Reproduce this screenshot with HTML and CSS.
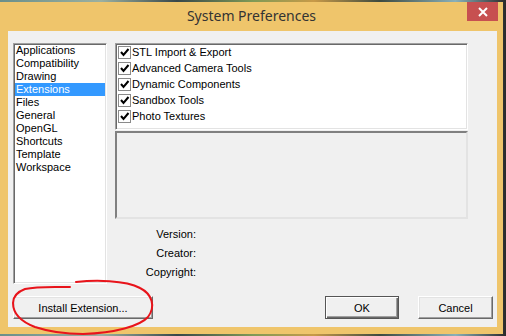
FILE: index.html
```html
<!DOCTYPE html>
<html>
<head>
    <meta charset="utf-8">
    <meta name="viewport" content="width=device-width, initial-scale=1">
    <title>System Preferences</title>
    <link rel="stylesheet" href="styles.css">
</head>
<body>
    <div class="window">
        <div class="titlebar">
            <span></span>
            <span class="title">System Preferences</span>
            <span class="close">
                <svg width="10" height="10" viewBox="0 0 10 10"><path d="M1 1 L9 9 M9 1 L1 9" stroke="#fff" stroke-width="2"/></svg>
            </span>
        </div>
        <div class="client">
            <div class="main">
                <ul class="pages">
                    <li>Applications</li>
                    <li>Compatibility</li>
                    <li>Drawing</li>
                    <li class="selected">Extensions</li>
                    <li>Files</li>
                    <li>General</li>
                    <li>OpenGL</li>
                    <li>Shortcuts</li>
                    <li>Template</li>
                    <li>Workspace</li>
                </ul>
                <div class="panel">
                    <div class="checklist">
                        <div class="check_row"><span class="chk"><svg width="13" height="13" viewBox="0 0 13 13"><path d="M3 6 L5.5 9 L10.5 3" fill="none" stroke="#000" stroke-width="2"/></svg></span>STL Import &amp; Export</div>
                        <div class="check_row"><span class="chk"><svg width="13" height="13" viewBox="0 0 13 13"><path d="M3 6 L5.5 9 L10.5 3" fill="none" stroke="#000" stroke-width="2"/></svg></span>Advanced Camera Tools</div>
                        <div class="check_row"><span class="chk"><svg width="13" height="13" viewBox="0 0 13 13"><path d="M3 6 L5.5 9 L10.5 3" fill="none" stroke="#000" stroke-width="2"/></svg></span>Dynamic Components</div>
                        <div class="check_row"><span class="chk"><svg width="13" height="13" viewBox="0 0 13 13"><path d="M3 6 L5.5 9 L10.5 3" fill="none" stroke="#000" stroke-width="2"/></svg></span>Sandbox Tools</div>
                        <div class="check_row"><span class="chk"><svg width="13" height="13" viewBox="0 0 13 13"><path d="M3 6 L5.5 9 L10.5 3" fill="none" stroke="#000" stroke-width="2"/></svg></span>Photo Textures</div>
                    </div>
                    <div class="desc"></div>
                    <div class="info">
                        <span class="label">Version:</span><span></span>
                        <span class="label">Creator:</span><span></span>
                        <span class="label">Copyright:</span><span></span>
                    </div>
                </div>
            </div>
            <div class="buttons">
                <button class="btn install">Install Extension...</button>
                <span class="spacer"></span>
                <button class="btn ok">OK</button>
                <button class="btn cancel">Cancel</button>
            </div>
        </div>
    </div>

    <!-- red marker loop round the install button -->
    <svg class="scribble" width="506" height="336" viewBox="0 0 506 336">
        <path d="M76 282 C95 280 125 280 140 288 C152 294 156 306 148 317 C140 326 115 333 83 334 C65 334 50 332 35 327 C22 322 13 314 13 303 C13 296 17 292 25 289 C38 286 55 287 70 287" fill="none" stroke="#e8141b" stroke-width="2" stroke-linecap="round"/>
    </svg>
</body>
</html>
```

FILE: styles.css
```css
html, body {
    margin: 0;
    padding: 0;
}
body {
    width: 506px;
    height: 336px;
    overflow: hidden;
    position: relative;
    background: linear-gradient(90deg, #6a8f8a, #9bb0a0 20%, #37474a 35%, #7f9a56 50%, #c89a48 62%, #3d4a40 75%, #8ab0b8 90%, #2b2b2b);
    font-family: "Liberation Sans", Arial, sans-serif;
    font-size: 11px;
    color: #000;
}
.window {
    margin-top: 2px;
    width: 503px;
    height: 332px;
    background: #efc56b;
}
.titlebar {
    display: grid;
    grid-template-columns: 36px 1fr 36px;
    height: 29px;
}
.title {
    font-family: "Noto Sans", "Open Sans", sans-serif;
    font-size: 14px;
    color: #333;
    text-align: center;
    line-height: 27px;
}
.close {
    width: 31px;
    height: 19px;
    background: #c75050;
    display: flex;
    align-items: center;
    justify-content: center;
}
.client {
    margin-left: 8px;
    width: 489px;
    height: 296px;
    background: #f0f0f0;
    display: flex;
    flex-direction: column;
}
.main {
    display: flex;
    gap: 8px;
    padding: 12px 0 0 5px;
}
.pages {
    list-style: none;
    margin: 0;
    padding: 0 1px;
    width: 94px;
    height: 241px;
    box-sizing: border-box;
    background: #fff;
    border: 1px solid;
    border-color: #a0a0a0 #fff #fff #a0a0a0;
    box-shadow: inset 1px 1px #696969, inset -1px -1px #e3e3e3;
}
.pages li {
    height: 13px;
    line-height: 13px;
    padding-left: 1px;
}
.pages .selected {
    background: #3399ff;
    color: #fff;
}
.panel {
    width: 353px;
}
.checklist {
    height: 87px;
    box-sizing: border-box;
    background: #fff;
    border: 1px solid;
    border-color: #a0a0a0 #fff #fff #a0a0a0;
    box-shadow: inset 1px 1px #696969, inset -1px -1px #e3e3e3;
    padding-left: 2px;
}
.check_row {
    display: flex;
    align-items: center;
    height: 16px;
}
.chk {
    width: 13px;
    height: 13px;
    box-sizing: border-box;
    border: 1px solid #8a8a8a;
    background: #fff;
    margin-right: 1px;
    display: flex;
}
.chk svg {
    margin: -1px;
}
.desc {
    margin-top: 1px;
    height: 88px;
    box-sizing: border-box;
    border: 2px solid;
    border-color: #808080 #e3e3e3 #e3e3e3 #808080;
}
.info {
    display: grid;
    grid-template-columns: 81px 1fr;
    grid-auto-rows: 19px;
    margin-top: 6px;
    line-height: 19px;
}
.label {
    text-align: right;
}
.buttons {
    display: flex;
    gap: 19px;
    margin-top: 12px;
    padding: 0 4px 0 5px;
    height: 23px;
}
.spacer {
    flex: 1;
}
.btn {
    font-family: "Liberation Sans", Arial, sans-serif;
    font-size: 11px;
    color: #000;
    background: #f0f0f0;
    height: 23px;
    padding: 0;
    border: 1px solid;
    border-color: #fff #696969 #696969 #fff;
    box-shadow: inset -1px -1px #a0a0a0, inset 1px 1px #e3e3e3;
}
.install {
    width: 140px;
}
.ok {
    width: 74px;
    border-color: #555;
    box-shadow: inset 1px 1px #fff, inset -1px -1px #696969, inset -2px -2px #a0a0a0;
}
.cancel {
    width: 75px;
}
.scribble {
    position: absolute;
    top: 0;
    left: 0;
    pointer-events: none;
}
```
